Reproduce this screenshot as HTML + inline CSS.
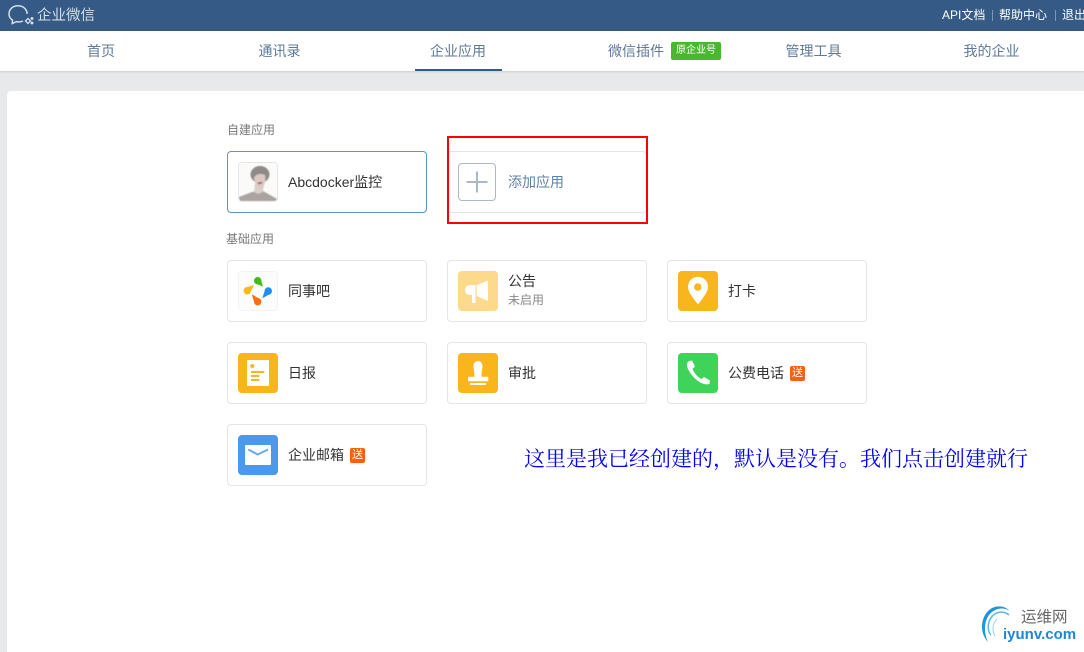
<!DOCTYPE html>
<html lang="zh"><head><meta charset="utf-8"><title>企业微信</title>
<style>
*{box-sizing:border-box}
html,body{margin:0;padding:0;width:1084px;height:652px;overflow:hidden}
body{position:relative;background:#e8e9eb;font-family:"Liberation Sans","Noto Sans CJK SC",sans-serif;font-size:14px;color:#333}
.a{position:absolute;white-space:nowrap}
#top{left:0;top:0;width:1084px;height:31px;background:#345a85}
#nav{left:0;top:31px;width:1084px;height:40px;background:#fff;box-shadow:0 1px 2px rgba(0,0,0,.12)}
.n{top:31px;height:40px;line-height:40px;font-size:14px;color:#5f7a99;transform:translateX(-50%);text-align:center}
#card{left:7px;top:91px;width:1077px;height:561px;background:#fff;border-radius:4px 0 0 0}
.t{position:absolute;width:200px;height:62px;border:1px solid #e4e5e7;border-radius:4px;background:#fff}
.i{position:absolute;left:10px;top:10px;width:40px;height:40px;border-radius:4px;overflow:hidden}
.i svg{display:block}
.l{position:absolute;left:60px;top:0;line-height:60px;font-size:14px;color:#333;white-space:nowrap}
.s{position:absolute;width:15px;height:15px;background:#fa5f14;color:#fff;font-size:11px;line-height:15px;text-align:center;border-radius:2px;top:23px}
.h{font-size:12px;color:#787878;line-height:16px}
</style></head><body>
<div class="a" id="top"></div>
<svg class="a" style="left:8px;top:4px" width="28" height="24" viewBox="0 0 28 24" fill="none" stroke="#d5deea" stroke-width="1.500"><path d="M5 16.500C2.500 15 1 12.500 1 10 1 5 5 1.800 10 1.800S19 5 19.200 10"/><path d="M4.600 16 4.200 19.500 8.500 17.600C10.500 18 13 18 15 17"/><path d="M20 14.500 22.500 17 20 19.500 17.500 17Z" stroke-width="1.300"/><circle cx="24" cy="14.500" r="0.700"/><circle cx="24" cy="19" r="0.700"/></svg>
<div class="a" style="left:37px;top:6px;line-height:20px;font-size:14.500px;color:#d5deea">企业微信</div>
<div class="a" style="left:942px;top:6px;line-height:18px;font-size:12px;color:#fff">API文档</div>
<div class="a" style="left:992px;top:10px;width:1px;height:11px;background:#7f97b3"></div>
<div class="a" style="left:999px;top:6px;line-height:18px;font-size:12px;color:#fff">帮助中心</div>
<div class="a" style="left:1055px;top:10px;width:1px;height:11px;background:#7f97b3"></div>
<div class="a" style="left:1062px;top:6px;line-height:18px;font-size:12px;color:#fff">退出</div>

<div class="a" id="nav"></div>
<div class="a n" style="left:101px">首页</div>
<div class="a n" style="left:279.500px">通讯录</div>
<div class="a n" style="left:458px">企业应用</div>
<div class="a" style="left:415px;top:69px;width:87px;height:2px;background:#345a85"></div>
<div class="a n" style="left:636px">微信插件</div>
<div class="a" style="left:671px;top:42px;width:50px;height:18px;background:#48b82e;border-radius:2px;color:#fff;font-size:10px;line-height:18px;text-align:center">原企业号</div>
<div class="a n" style="left:813.500px">管理工具</div>
<div class="a n" style="left:991.500px">我的企业</div>

<div class="a" id="card"></div>
<div class="a h" style="left:227px;top:122px">自建应用</div>

<div class="t" style="left:227px;top:151px;border-color:#5f93c6">
 <div class="i" style="border:1px solid #e6e6e6">
  <svg width="38" height="38" viewBox="0 0 38 38"><defs><filter id="b"><feGaussianBlur stdDeviation=".5"/></filter></defs><rect width="38" height="38" fill="#fbfaf9"/><g filter="url(#b)"><path d="M0 38V34L13 29 24 28 38 36V38Z" fill="#aaa39f"/><path d="M16 20H25L24 29 19 31 15 29Z" fill="#dccfca"/><ellipse cx="21" cy="11.500" rx="9.500" ry="8.500" fill="#8f8a87"/><path d="M15 15C16 11 22 10 26 12 27 17 26 22 23 25 20 25 16 22 15 15Z" fill="#d9c8c3"/><path d="M19 20.500 23 19.500" stroke="#a5413f" stroke-width="1.500"/></g></svg>
 </div>
 <div class="l">Abcdocker监控</div>
</div>

<div class="t" style="left:447px;top:151px">
 <div class="i" style="border:1px solid #aab8c9;width:38px;height:38px;left:10px;top:11px;border-radius:4px">
  <svg width="36" height="36" viewBox="0 0 36 36"><path d="M18 7.500V28.500M7.500 18H28.500" stroke="#aab8c9" stroke-width="2"/></svg>
 </div>
 <div class="l" style="color:#5f82a8">添加应用</div>
</div>
<div class="a" style="left:447px;top:136px;width:201px;height:88px;border:2px solid #f00"></div>

<div class="a h" style="left:226px;top:231px">基础应用</div>

<div class="t" style="left:227px;top:260px">
 <div class="i" style="border:1px solid #f3f3f3">
  <svg width="38" height="38" viewBox="0 0 38 38"><rect width="38" height="38" fill="#fcfcfc"/>
  <g fill="#3fbf16"><circle cx="18.700" cy="8.700" r="3.700"/><polygon points="15.950,11.170 21.450,6.230 24,14.600"/></g>
  <g fill="#1e8ff0"><circle cx="29.300" cy="19" r="3.700"/><polygon points="32.160,21.350 26.440,16.650 23.300,26.300"/></g>
  <g fill="#f96f12"><circle cx="18.700" cy="29.700" r="3.700"/><polygon points="21.570,27.370 15.830,32.030 12.700,22.300"/></g>
  <g fill="#fbb80f"><circle cx="8.300" cy="18.700" r="3.700"/><polygon points="10.700,21.520 5.900,15.880 15,13"/></g></svg>
 </div>
 <div class="l">同事吧</div>
</div>

<div class="t" style="left:447px;top:260px">
 <div class="i" style="background:#fcd98b">
  <svg width="40" height="40" viewBox="0 0 40 40"><path d="M12 14H17.500V24H12C9 24 7 22 7 19S9 14 12 14Z" fill="#fff"/><polygon points="18.700,14 30,9.500 30,30 18.700,25" fill="#fff"/><rect x="14" y="24" width="3.500" height="8" fill="#fff"/></svg>
 </div>
 <div class="l" style="line-height:18px;top:11px">公告</div>
 <div class="l" style="line-height:16px;top:31px;font-size:12px;color:#888">未启用</div>
</div>

<div class="t" style="left:667px;top:260px">
 <div class="i" style="background:#f8b61c">
  <svg width="40" height="40" viewBox="0 0 40 40"><path d="M20 33.300C15 27 10 21 10 15.700A10 10 0 0 1 30 15.700C30 21 25 27 20 33.300Z" fill="#fff"/><circle cx="19.800" cy="16" r="3.700" fill="#f8b61c"/></svg>
 </div>
 <div class="l">打卡</div>
</div>

<div class="t" style="left:227px;top:342px">
 <div class="i" style="background:#f8b61c">
  <svg width="40" height="40" viewBox="0 0 40 40"><rect x="9" y="7" width="22" height="26" rx="1" fill="#fff"/><circle cx="14.300" cy="13" r="2" fill="#f8b61c"/><path d="M13 18H26.300V20H13ZM13 22H21.300V24H13ZM13 26H21.300V28H13Z" fill="#f8b61c"/></svg>
 </div>
 <div class="l">日报</div>
</div>

<div class="t" style="left:447px;top:342px">
 <div class="i" style="background:#f8b61c">
  <svg width="40" height="40" viewBox="0 0 40 40"><path d="M15.500 13C15.500 10 17.500 8 20 8 22.500 8 24.500 10 24.500 13 24.500 16 23.500 18 23.500 24H16.500C16.500 18 15.500 16 15.500 13Z" fill="#fff"/><rect x="10" y="23.700" width="20.300" height="4.500" rx=".5" fill="#fff"/><rect x="12" y="30" width="16" height="2" fill="#fff"/></svg>
 </div>
 <div class="l">审批</div>
</div>

<div class="t" style="left:667px;top:342px">
 <div class="i" style="background:#3fd359">
  <svg width="40" height="40" viewBox="0 0 40 40"><path d="M11 8 14 7.500 17 13.500 14.500 16C16 20 20 24.500 23.500 26L26 24 32 27.500 31.500 31C28 32 24 31 20 28 15 24.500 10 18 9 13 8.500 11 9.500 9 11 8Z" fill="#fff"/></svg>
 </div>
 <div class="l">公费电话</div>
 <div class="s" style="left:122px">送</div>
</div>

<div class="t" style="left:227px;top:424px">
 <div class="i" style="background:#4c98ec">
  <svg width="40" height="40" viewBox="0 0 40 40"><rect x="7" y="10" width="26" height="20" rx="1" fill="#fff"/><path d="M10.300 14.500 19.700 19.500 30 14.500" fill="none" stroke="#6aaaf0" stroke-width="2"/></svg>
 </div>
 <div class="l">企业邮箱</div>
 <div class="s" style="left:122px">送</div>
</div>

<div class="a" style="left:524px;top:445px;line-height:26px;font-size:21px;color:#00f;font-family:'Noto Serif CJK SC','Liberation Serif',serif">这里是我已经创建的，默认是没有。我们点击创建就行</div>

<svg class="a" style="left:978px;top:603px" width="46" height="46" viewBox="0 0 46 46"><path d="M10 39C1 30 2 12 14 5 20 2 27 3 32 8 26 4 19 5 14 9 6 15 5 29 10 39Z" fill="#1d94dc"/><path d="M12.700 32C9 27 9 17 16 11.500 21 8 27 8.500 31 12" fill="none" stroke="#5cb8e8" stroke-width="1.500"/><path d="M17 33C14 28 14 21 19 16" fill="none" stroke="#9ad4f2" stroke-width="1"/></svg>
<div class="a" style="left:1021px;top:609px;line-height:18px;font-size:15.500px;color:#666">运维网</div>
<div class="a" style="left:1003px;top:626px;line-height:18px;font-size:15px;font-weight:bold;color:#1c86d8">iyunv.com</div>
</body></html>
